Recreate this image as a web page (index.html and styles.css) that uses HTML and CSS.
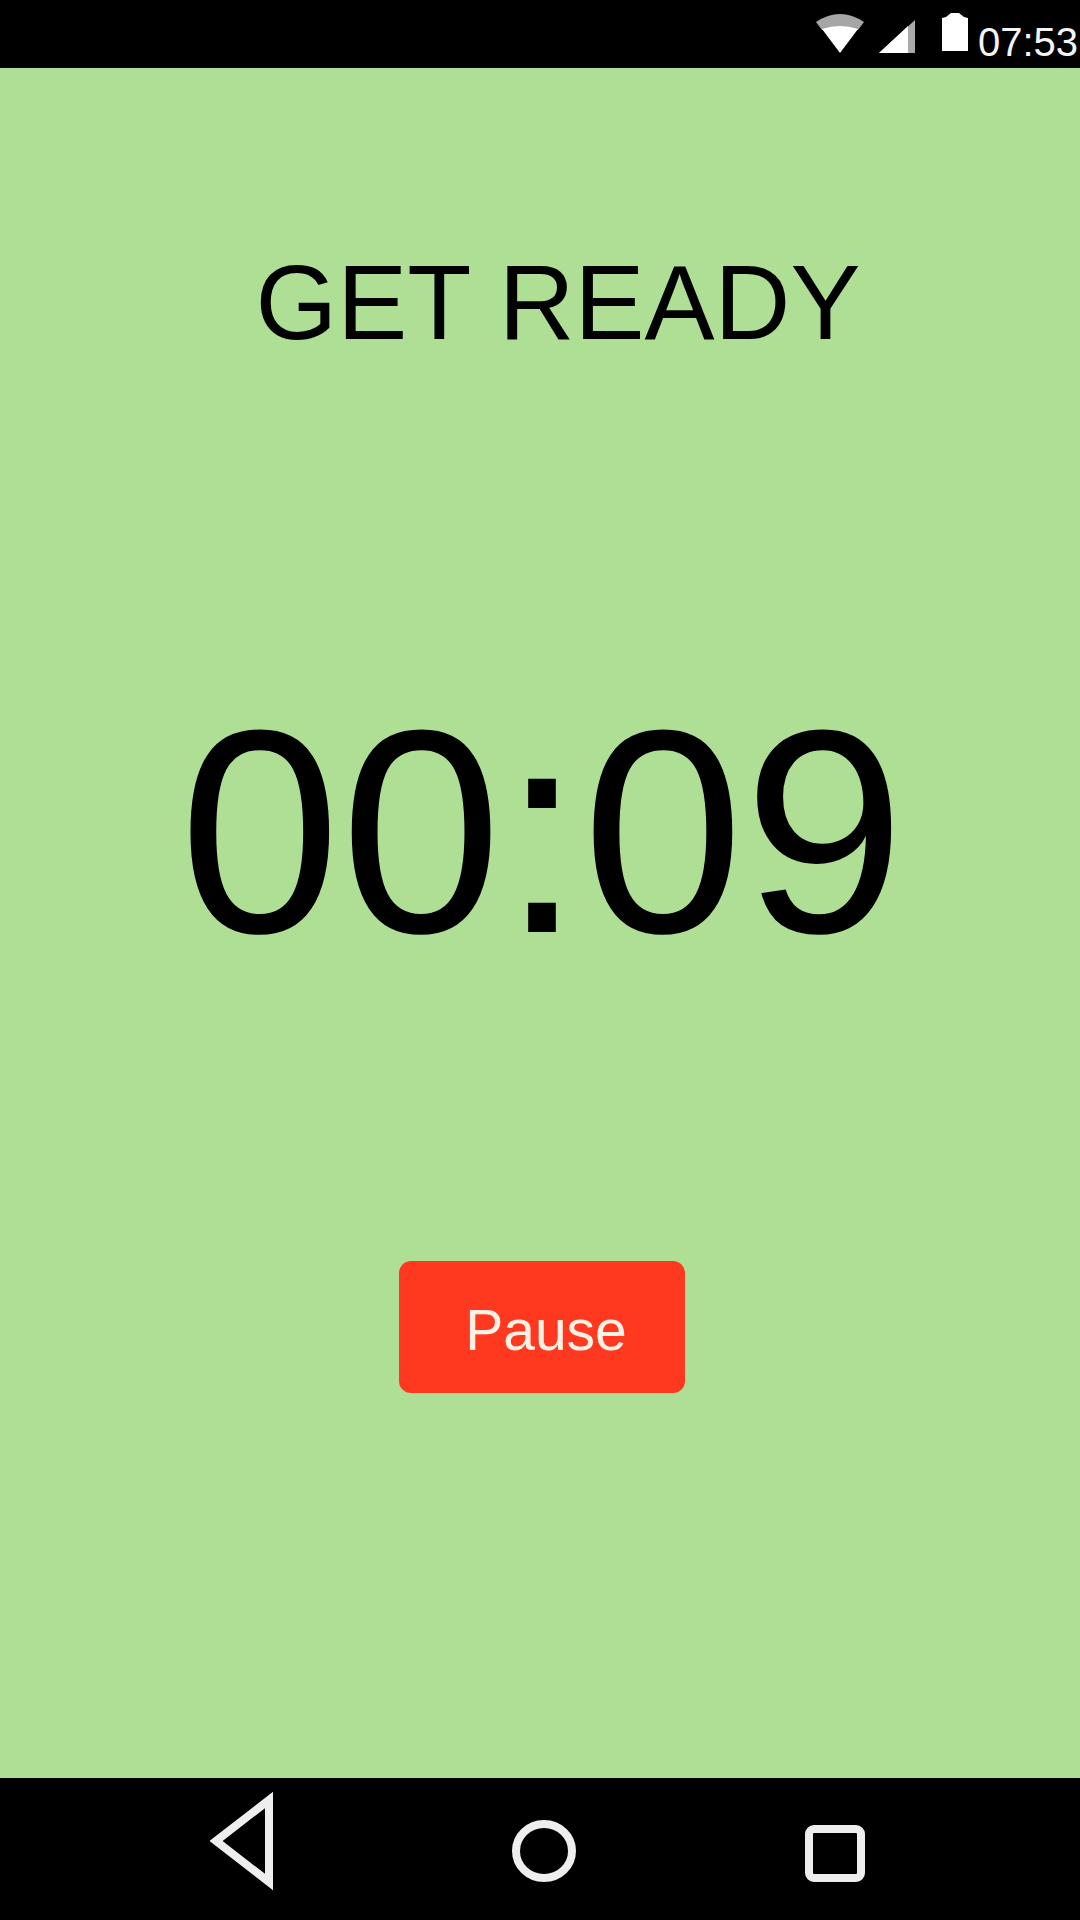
FILE: index.html
```html
<!DOCTYPE html>
<html lang="en">
<head>
<meta charset="utf-8">
<meta name="viewport" content="width=device-width, initial-scale=1">
<title>Get ready</title>
<link rel="stylesheet" href="styles.css">
</head>
<body>
<header class="status-bar">
  <svg class="status-icons" width="156" height="68" viewBox="0 0 156 68" aria-hidden="true">
    <path d="M-2 22Q22 6 46 22L40 30Q22 24 4 30Z" fill="#a6a6a6"/>
    <path d="M4 29Q22 23 40 29L22 53Z" fill="#fff"/>
    <path d="M61 53L97 20V53Z" fill="#aaa"/>
    <path d="M61 53L90 26V53Z" fill="#fff"/>
    <path d="M124 18L128 17L133 13H141L146 17L150 18V51H124Z" fill="#fff"/>
  </svg>
  <time class="clock">07:53</time>
</header>
<main class="workout">
  <h1 class="phase">GET READY</h1>
  <div class="timer" role="timer">00:09</div>
  <button class="pause" type="button">Pause</button>
</main>
<nav class="nav-bar" aria-label="System">
  <button class="nav-button" type="button" aria-label="Back">
    <svg width="80" height="110" viewBox="0 0 80 110"><path d="M11 56L64 15V97Z"/></svg>
  </button>
  <button class="nav-button" type="button" aria-label="Home">
    <svg width="80" height="110" viewBox="0 0 80 110"><ellipse cx="44" cy="66" rx="28" ry="27"/></svg>
  </button>
  <button class="nav-button" type="button" aria-label="Recent apps">
    <svg width="80" height="110" viewBox="0 0 80 110"><rect x="14" y="44" width="52" height="49" rx="5"/></svg>
  </button>
</nav>
</body>
</html>
```
FILE: styles.css
```css
* {
  box-sizing: border-box;
}

body {
  margin: 0;
  min-height: 100vh;
  display: flex;
  flex-direction: column;
  background: #aedf94;
  color: #000;
  font-family: "Liberation Sans", Arial, sans-serif;
}

.status-bar {
  display: flex;
  justify-content: flex-end;
  gap: 4px;
  padding-right: 2px;
  background: #000;
  color: #f4f4f4;
}

.status-icons {
  display: block;
  overflow: visible;
}

.clock {
  padding-top: 20px;
  font-size: 40px;
  line-height: 44px;
}

.workout {
  flex: 1;
  display: flex;
  flex-direction: column;
  align-items: center;
  padding: 175px 0 160px 4px;
}

.phase {
  margin: 0 0 308px;
  padding-left: 32px;
  font-size: 105px;
  font-weight: 400;
  line-height: 120px;
  white-space: nowrap;
}

.timer {
  margin-bottom: 270px;
  font-size: 290px;
  line-height: 320px;
}

.pause {
  padding: 37px 58px 31px 66px;
  border: 0;
  border-radius: 12px;
  background: #ff3820;
  color: #fff0e4;
  font-family: inherit;
  font-size: 57px;
  line-height: 64px;
}

.nav-bar {
  display: flex;
  justify-content: space-between;
  padding: 7px 19% 25px;
  background: #000;
}

.nav-button {
  padding: 0;
  border: 0;
  background: none;
}

.nav-button svg {
  display: block;
  fill: none;
  stroke: #eee;
  stroke-width: 8px;
}
```
